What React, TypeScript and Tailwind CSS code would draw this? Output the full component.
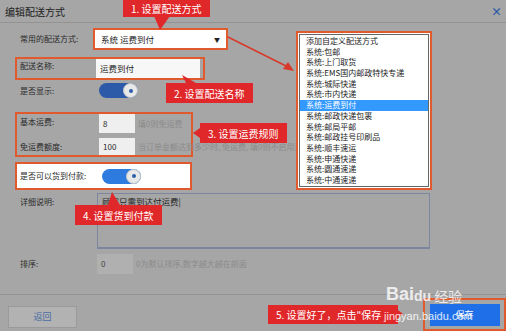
import React from "react";

const font = { fontFamily: '"Noto Sans CJK SC", "Noto Sans", sans-serif' };

const options = [
    "添加自定义配送方式",
    "系统:包邮",
    "系统:上门取货",
    "系统:EMS国内邮政特快专递",
    "系统:城际快递",
    "系统:市内快递",
    "系统:运费到付",
    "系统:邮政快递包裹",
    "系统:邮局平邮",
    "系统:邮政挂号印刷品",
    "系统:顺丰速运",
    "系统:申通快递",
    "系统:圆通速递",
    "系统:中通速递",
];

function Toggle({ color }: { color: string }) {
    return (
        <div className={`relative h-[15px] w-[39px] shrink-0 rounded-full ${color}`}>
            <div className="absolute right-0 top-0 flex h-[15px] w-[15px] items-center justify-center rounded-full border border-[#c8c8c8] bg-[#e8e8e8]">
                <div className="h-[4px] w-[4px] rounded-full bg-[#2f5fa8]" />
            </div>
        </div>
    );
}

function Callout({ className, children }: { className: string; children: React.ReactNode }) {
    return (
        <div className={`absolute flex items-center whitespace-nowrap bg-[#e0282a] px-[8px] text-[10px] text-white ${className}`}>
            {children}
        </div>
    );
}

export default function App() {
    return (
        <div className="relative h-[331px] w-[506px] overflow-hidden bg-[#a6a6a6] text-[8px] text-[#2a2a2a]" style={font}>
            {/* header */}
            <div className="flex h-[23px] items-center justify-between border-b border-[#939393] pl-[5px] pr-[4px]">
                <span className="text-[10px] text-[#222]">编辑配送方式</span>
                <span className="text-[11px] font-bold text-[#2a58a6]">×</span>
            </div>

            <div className="pl-[15px]">
                {/* row 1 */}
                <div className="mt-[5px] flex items-center pl-[5px]">
                    <span className="w-[73px] shrink-0">常用的配送方式:</span>
                    <div className="flex h-[22px] w-[135px] items-center justify-between border-2 border-[#e05a2e] bg-white pl-[6px] pr-[6px] text-[8.5px] text-[#222]">
                        <span>系统 运费到付</span>
                        <span className="text-[6px]">▼</span>
                    </div>
                </div>

                {/* row 2 */}
                <div className="mt-[7px] flex h-[23px] w-[190px] items-start border-2 border-[#e05a2e] pl-[3px]">
                    <span className="mt-[1px] w-[76px] shrink-0">配送名称:</span>
                    <div className="flex h-[19px] w-[104px] items-center bg-[#f7f7f7] pl-[4px] text-[8.5px] text-[#222]">运费到付</div>
                </div>

                {/* show */}
                <div className="mt-[3px] flex h-[15px] items-center pl-[5px]">
                    <span className="w-[79px] shrink-0">是否显示:</span>
                    <Toggle color="bg-[#2c5aa8]" />
                </div>

                {/* row 3 */}
                <div className="mt-[14px] flex h-[45px] w-[178px] flex-col border-2 border-[#e05a2e] pl-[3px]">
                    <div className="flex h-[19px] items-start">
                        <span className="mt-[2px] w-[79px] shrink-0">基本运费:</span>
                        <div className="flex h-[19px] w-[36px] shrink-0 items-center bg-[#efefef] pl-[4px]">8</div>
                        <span className="ml-[3px] mt-[4px] whitespace-nowrap text-[#8b8b8b]">填0则免运费</span>
                    </div>
                    <div className="mt-[5px] flex h-[17px] items-center">
                        <span className="w-[79px] shrink-0">免运费额度:</span>
                        <div className="flex h-[17px] w-[36px] shrink-0 items-center bg-[#efefef] pl-[4px]">100</div>
                        <span className="ml-[3px] whitespace-nowrap text-[#8b8b8b]">当订单金额达到多少时, 免运费, 填0则不启用这项</span>
                    </div>
                </div>

                {/* row 4 */}
                <div className="mt-[5px] flex h-[28px] w-[177px] items-center border-2 border-[#e05a2e] bg-white pl-[3px]">
                    <span className="w-[82px] shrink-0">是否可以货到付款:</span>
                    <Toggle color="bg-[#2e7be0]" />
                </div>

                {/* detail */}
                <div className="mt-[3px] flex pl-[5px]">
                    <span className="mt-[3px] w-[77px] shrink-0">详细说明:</span>
                    <div className="h-[56px] w-[333px] border border-b-2 border-[#7d86a0] pl-[4px] pt-[1px] text-[8.5px] text-[#222]">
                        顾客只需到达付运费|
                    </div>
                </div>

                {/* sort */}
                <div className="mt-[5px] flex items-center pl-[5px]">
                    <span className="w-[77px] shrink-0">排序:</span>
                    <div className="flex h-[20px] w-[36px] items-center bg-[#b0b0b0] pl-[4px] text-[#444]">0</div>
                    <span className="ml-[3px] text-[#8b8b8b]">0为默认排序,数字越大越在前面</span>
                </div>
            </div>

            {/* footer */}
            <div className="mt-[20px] flex items-center justify-between border-t border-[#939393] pl-[8px] pt-[3px]">
                <div className="mt-[4px] flex h-[22px] w-[69px] items-center justify-center border border-[#9a9a9a] bg-[#b2b2b2] text-[9px] text-[#4a6ea6]">
                    返回
                </div>
                <div className="flex h-[33px] w-[83px] items-center justify-center border-2 border-[#e05a2e]">
                    <div className="flex h-[22px] w-[70px] items-center justify-center bg-[#1e6fe8] text-[9px] text-white">保存</div>
                </div>
            </div>

            {/* open select list */}
            <div className="absolute left-[296px] top-[31px] h-[159px] w-[136px] border-2 border-[#e05a2e] bg-white p-[1px]">
                <div className="h-full border border-[#666] pt-[1px]">
                    {options.map((o, i) => (
                        <div
                            key={o}
                            className={`h-[10.7px] whitespace-nowrap pl-[6px] text-[8px] leading-[10.7px] ${i === 6 ? "bg-[#3399ff] text-white" : "text-[#222]"}`}
                        >
                            {o}
                        </div>
                    ))}
                </div>
            </div>

            {/* callouts */}
            <Callout className="left-[123px] top-0 h-[17px]">1. 设置配送方式</Callout>
            <Callout className="left-[166px] top-[83px] h-[20px]">2. 设置配送名称</Callout>
            <Callout className="left-[200px] top-[123px] h-[20px]">3. 设置运费规则</Callout>
            <Callout className="left-[75px] top-[205px] h-[20px]">4. 设置货到付款</Callout>
            <Callout className="left-[268px] top-[305px] h-[19px] w-[130px]">5. 设置好了，点击"保存</Callout>

            <svg className="pointer-events-none absolute inset-0" width="506" height="331">
                <polygon points="154,16 170,16 160,30" fill="#e0282a" />
                <polygon points="182,75 186,83 196,83" fill="#e0282a" />
                <polygon points="200,128 200,138 193,133" fill="#e0282a" />
                <polygon points="108,205 120,205 112,192" fill="#e0282a" />
                <polygon points="398,310 398,318 403,314" fill="#e0282a" />
                <line x1="228" y1="37" x2="290" y2="68" stroke="#d9392a" strokeWidth="1.5" />
                <polygon points="294,71 283,69 288,62" fill="#d9392a" />
            </svg>

            {/* watermark */}
            <div className="pointer-events-none absolute left-[386px] top-[285px] flex items-end text-white/80">
                <span className="text-[18px] font-bold leading-none" style={{ fontFamily: '"Liberation Sans", sans-serif' }}>Bai</span>
                <span className="text-[14px] font-bold leading-none" style={{ fontFamily: '"Liberation Sans", sans-serif' }}>du</span>
                <span className="ml-[3px] text-[14px] leading-none">经验</span>
            </div>
            <div className="pointer-events-none absolute left-[384px] top-[308px] text-[11px] text-white/85" style={{ fontFamily: '"Liberation Sans", sans-serif' }}>
                jingyan.baidu.com
            </div>
        </div>
    );
}
